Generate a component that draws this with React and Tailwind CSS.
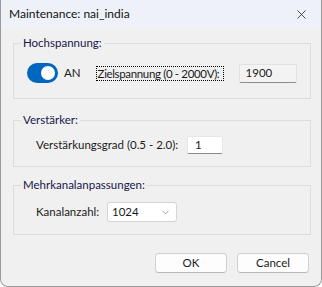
import { ChevronDown, X } from "lucide-react";

const font = { fontFamily: 'Lato, "Liberation Sans", Arial, sans-serif' };

const Group = ({ title, className, children }) => {
  return (
    <fieldset className={`border border-[#dcdcdc] ${className}`}>
      <legend className="ml-[7px] px-[2px] h-[16px] leading-[16px] text-[#16164a]">{title}</legend>
      {children}
    </fieldset>
  );
};

const App = () => {
  return (
    <div
      className="w-[322px] h-[287px] flex flex-col bg-[#f0f0f0] text-[11.5px] leading-[16px] text-[#1a1a1a] border-x border-b border-[#9a9a9a] rounded-b-[8px] overflow-hidden"
      style={font}
    >
      {/* title bar */}
      <div className="h-[28px] shrink-0 flex items-center justify-between pl-[8px] pr-[12px] bg-[#eef2f8]">
        <span className="text-[12px] text-[#111]">Maintenance: nai_india</span>
        <X size={15} strokeWidth={1.3} className="text-[#222]" />
      </div>

      <div className="flex flex-col pl-[12px] pr-[10px] pt-[7px]">
        <Group title="Hochspannung:">
          <div className="flex items-center pl-[13px] pt-[12px] pb-[15px] whitespace-nowrap">
            <div className="w-[31px] h-[20px] rounded-full bg-[#0067c0] flex items-center justify-end pr-[3px]">
              <div className="w-[14px] h-[14px] rounded-full bg-white" />
            </div>
            <span className="ml-[6px]">AN</span>
            <span className="ml-[15px] w-[128px] h-[15px] leading-[13px] pl-[1px] border border-dotted border-black tracking-[-0.35px]">
              Zielspannung (0 - 2000V):
            </span>
            <div className="ml-[15px] w-[58px] h-[19px] flex items-center pl-[6px] bg-[#f3f3f3] border border-[#e2e2e2] border-b-[#8a8a8a] rounded-[2px]">
              1900
            </div>
          </div>
        </Group>

        <Group title="Verstärker:" className="mt-[13px]">
          <div className="flex items-center pl-[22px] pt-[8px] pb-[12px] whitespace-nowrap">
            <span className="w-[140px]">Verstärkungsgrad (0.5 - 2.0):</span>
            <div className="ml-[11px] w-[36px] h-[18px] flex items-center pl-[7px] bg-white border border-[#e6e6e6] border-b-[#8a8a8a] rounded-[2px]">
              1
            </div>
          </div>
        </Group>

        <Group title="Mehrkanalanpassungen:" className="mt-[10px]">
          <div className="flex items-center pl-[22px] pt-[9px] pb-[12px] whitespace-nowrap">
            <span className="w-[60px]">Kanalanzahl:</span>
            <div className="ml-[11px] w-[70px] h-[20px] flex items-center justify-between pl-[4px] pr-[5px] bg-white border border-[#d4d4d4] rounded-[3px]">
              <span>1024</span>
              <ChevronDown size={11} strokeWidth={1.2} className="text-[#555]" />
            </div>
          </div>
        </Group>

        <div className="flex justify-end gap-[10px] mt-[18px] pr-[2px]">
          <button className="w-[72px] h-[20px] bg-[#fdfdfd] border border-[#d0d0d0] border-b-[#b8b8b8] rounded-[4px] text-[#1a1a1a]">
            OK
          </button>
          <button className="w-[72px] h-[20px] bg-[#fdfdfd] border border-[#d0d0d0] border-b-[#b8b8b8] rounded-[4px] text-[#1a1a1a]">
            Cancel
          </button>
        </div>
      </div>
    </div>
  );
};

export default App;
